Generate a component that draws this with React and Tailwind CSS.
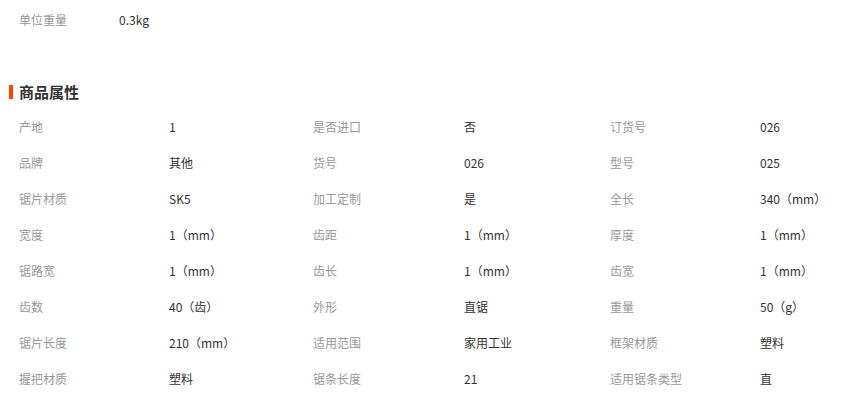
const rows = [
  ["产地", "1", "是否进口", "否", "订货号", "026"],
  ["品牌", "其他", "货号", "026", "型号", "025"],
  ["锯片材质", "SK5", "加工定制", "是", "全长", "340（mm）"],
  ["宽度", "1（mm）", "齿距", "1（mm）", "厚度", "1（mm）"],
  ["锯路宽", "1（mm）", "齿长", "1（mm）", "齿宽", "1（mm）"],
  ["齿数", "40（齿）", "外形", "直锯", "重量", "50（g）"],
  ["锯片长度", "210（mm）", "适用范围", "家用工业", "框架材质", "塑料"],
  ["握把材质", "塑料", "锯条长度", "21", "适用锯条类型", "直"],
];

export default function App() {
  return (
    <div
      className="w-[862px] h-[398px] bg-white overflow-hidden text-[12px]"
      style={{ fontFamily: '"Noto Sans CJK SC", "Noto Sans", sans-serif' }}
    >
      <div className="h-[40px] flex items-center pl-[19px]">
        <span className="w-[100px] text-[#999]">单位重量</span>
        <span className="text-[#333]">0.3kg</span>
      </div>
      <div className="mt-[40px] h-[24px] flex items-center pl-[9px]">
        <span className="w-[4px] h-[14px] bg-[#ff4400] mr-[6px]"></span>
        <span className="text-[15px] leading-[24px] font-bold text-[#333] -mt-[1px]">商品属性</span>
      </div>
      <div className="mt-[5px] pl-[19px] grid grid-cols-[150px_144px_151px_146px_150px_1fr]">
        {rows.map((r, i) =>
          r.map((c, j) => (
            <div
              key={i + "-" + j}
              className={
                "h-[36px] flex items-center whitespace-nowrap " +
                (j % 2 === 0 ? "text-[#999]" : "text-[#333]")
              }
            >
              {c}
            </div>
          ))
        )}
      </div>
    </div>
  );
}
